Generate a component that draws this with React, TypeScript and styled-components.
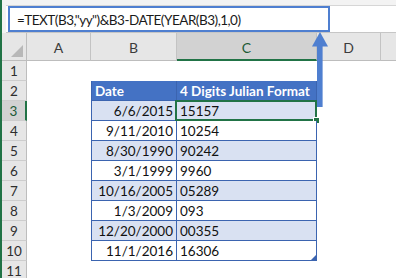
import React from 'react'
import styled, { createGlobalStyle, css } from 'styled-components'

const GlobalStyle = createGlobalStyle`
  html, body {
    margin: 0;
    padding: 0;
    background: #ffffff;
  }
  body {
    font-family: Lato, "Liberation Sans", sans-serif;
  }
`

const GREEN = '#217346'
const TABLE_BLUE = '#4472c4'
const LINE_BLUE = '#3b64b0'
const BAND = '#d9e1f2'
const CALLOUT = '#4f7fd0'

// last column is only partly on screen, so its letter is never seen
const COLS = ['A', 'B', 'C', 'D', '']

const rows = [
  { date: '6/6/2015', julian: '15157' },
  { date: '9/11/2010', julian: '10254' },
  { date: '8/30/1990', julian: '90242' },
  { date: '3/1/1999', julian: '9960' },
  { date: '10/16/2005', julian: '05289' },
  { date: '1/3/2009', julian: '093' },
  { date: '12/20/2000', julian: '00355' },
  { date: '11/1/2016', julian: '16306' },
]

const Frame = styled.div`
  position: relative;
  width: 396px;
  height: 278px;
  overflow: hidden;
  box-sizing: border-box;
  border-left: 2px solid ${GREEN};
  display: flex;
  flex-direction: column;
  background: #ffffff;
`

const FormulaStrip = styled.div`
  display: flex;
  padding: 5px 0 0 4px;
  background: #f3f3f3;
`

const FormulaField = styled.div`
  flex: 1;
  display: flex;
  padding-left: 2px;
  background: #ffffff;
  border-top: 1px solid #d6d6d6;
  border-bottom: 1px solid #c6c6c6;
`

const FormulaBox = styled.div`
  box-sizing: border-box;
  width: 322px;
  height: 26px;
  border: 2.5px solid ${CALLOUT};
  padding: 1px 0 0 7px;
  display: flex;
  align-items: center;
  font-size: 13.5px;
  letter-spacing: -0.5px;
  color: #1a1a1a;
  white-space: nowrap;
`

const Sheet = styled.div`
  display: grid;
  grid-template-columns: 25px 64px 86px 140px 64px 64px;
  grid-template-rows: 28px repeat(11, 20px);
  font-size: 13.5px;
  color: #111111;
`

const Corner = styled.div`
  position: relative;
  background: #e6e6e6;
  border-right: 1px solid #bdbdbd;
  border-bottom: 1px solid #bdbdbd;

  &::after {
    content: '';
    position: absolute;
    right: 3px;
    bottom: 3px;
    border-style: solid;
    border-width: 0 0 12px 12px;
    border-color: transparent transparent #b8b8b8 transparent;
  }
`

const ColHead = styled.div<{ $selected?: boolean }>`
  box-sizing: border-box;
  display: flex;
  align-items: center;
  justify-content: center;
  padding-top: 2px;
  background: #e6e6e6;
  border-right: 1px solid #c3c3c3;
  border-bottom: 1px solid #bdbdbd;
  color: #3c3c3c;
  font-size: 14px;
  ${(p) =>
    p.$selected &&
    css`
      background: #d2d2d2;
      border-bottom: 2px solid ${GREEN};
      color: #1c5a36;
    `}
`

const RowHead = styled.div<{ $selected?: boolean }>`
  box-sizing: border-box;
  display: flex;
  align-items: center;
  justify-content: center;
  padding-top: 1px;
  background: #e6e6e6;
  border-right: 1px solid #bdbdbd;
  border-bottom: 1px solid #cdcdcd;
  color: #2e2e2e;
  ${(p) =>
    p.$selected &&
    css`
      background: #d2d2d2;
      border-right: 2px solid ${GREEN};
      color: #1c5a36;
    `}
`

const Blank = styled.div``

const TableCell = styled.div<{
  $kind: 'head' | 'band' | 'plain'
  $first?: boolean
  $right?: boolean
  $active?: boolean
  $corner?: boolean
}>`
  position: relative;
  box-sizing: border-box;
  display: flex;
  align-items: center;
  padding: 1px 3px 0 3px;
  white-space: nowrap;
  border-right: 1px solid ${LINE_BLUE};
  border-bottom: 1px solid ${LINE_BLUE};
  ${(p) => p.$first && css`border-left: 1px solid ${LINE_BLUE};`}
  justify-content: ${(p) => (p.$right ? 'flex-end' : 'flex-start')};
  background: ${(p) => (p.$kind === 'head' ? TABLE_BLUE : p.$kind === 'band' ? BAND : '#ffffff')};
  ${(p) =>
    p.$kind === 'head' &&
    css`
      color: #ffffff;
      font-weight: 700;
    `}
  ${(p) =>
    p.$active &&
    css`
      &::before {
        content: '';
        position: absolute;
        left: -2px;
        top: -1px;
        right: -1px;
        bottom: -1px;
        border: 2px solid ${GREEN};
      }
      &::after {
        content: '';
        position: absolute;
        right: -4px;
        bottom: -4px;
        width: 5px;
        height: 5px;
        background: ${GREEN};
        border: 1px solid #ffffff;
      }
    `}
  ${(p) =>
    p.$corner &&
    css`
      &::after {
        content: '';
        position: absolute;
        right: 0;
        bottom: 0;
        border-style: solid;
        border-width: 0 0 5px 5px;
        border-color: transparent transparent ${LINE_BLUE} transparent;
      }
    `}
`

const Callout = styled.svg`
  position: absolute;
  left: 310px;
  top: 32px;
`

const ArrowUp = () => (
  <Callout width="16" height="76" viewBox="0 0 16 76">
    <polygon points="8,0 0,14.5 16,14.5" fill={CALLOUT} />
    <rect x="5" y="13" width="5.6" height="62" fill={CALLOUT} />
  </Callout>
)

const SheetRow = ({ n }: { n: number }) => {
  const cells: React.ReactNode[] = [<RowHead key="h" $selected={n === 3}>{n}</RowHead>]
  const inTable = n >= 2 && n <= 10
  COLS.forEach((c, i) => {
    if (inTable && c === 'B') {
      const kind = n === 2 ? 'head' : n % 2 === 1 ? 'band' : 'plain'
      cells.push(
        <TableCell key={i} $kind={kind} $first $right={n !== 2}>
          {n === 2 ? 'Date' : rows[n - 3].date}
        </TableCell>,
      )
    } else if (inTable && c === 'C') {
      const kind = n === 2 ? 'head' : n % 2 === 1 ? 'band' : 'plain'
      cells.push(
        <TableCell key={i} $kind={kind} $active={n === 3} $corner={n === 10}>
          {n === 2 ? '4 Digits Julian Format' : rows[n - 3].julian}
        </TableCell>,
      )
    } else {
      cells.push(<Blank key={i} />)
    }
  })
  return <>{cells}</>
}

export default function App() {
  return (
    <>
      <GlobalStyle />
      <Frame>
        <FormulaStrip>
          <FormulaField>
            <FormulaBox>=TEXT(B3,"yy")&amp;B3-DATE(YEAR(B3),1,0)</FormulaBox>
          </FormulaField>
        </FormulaStrip>
        <Sheet>
          <Corner />
          {COLS.map((c, i) => (
            <ColHead key={i} $selected={c === 'C'}>
              {c}
            </ColHead>
          ))}
          {Array.from({ length: 11 }, (_, i) => (
            <SheetRow key={i} n={i + 1} />
          ))}
        </Sheet>
        <ArrowUp />
      </Frame>
    </>
  )
}
